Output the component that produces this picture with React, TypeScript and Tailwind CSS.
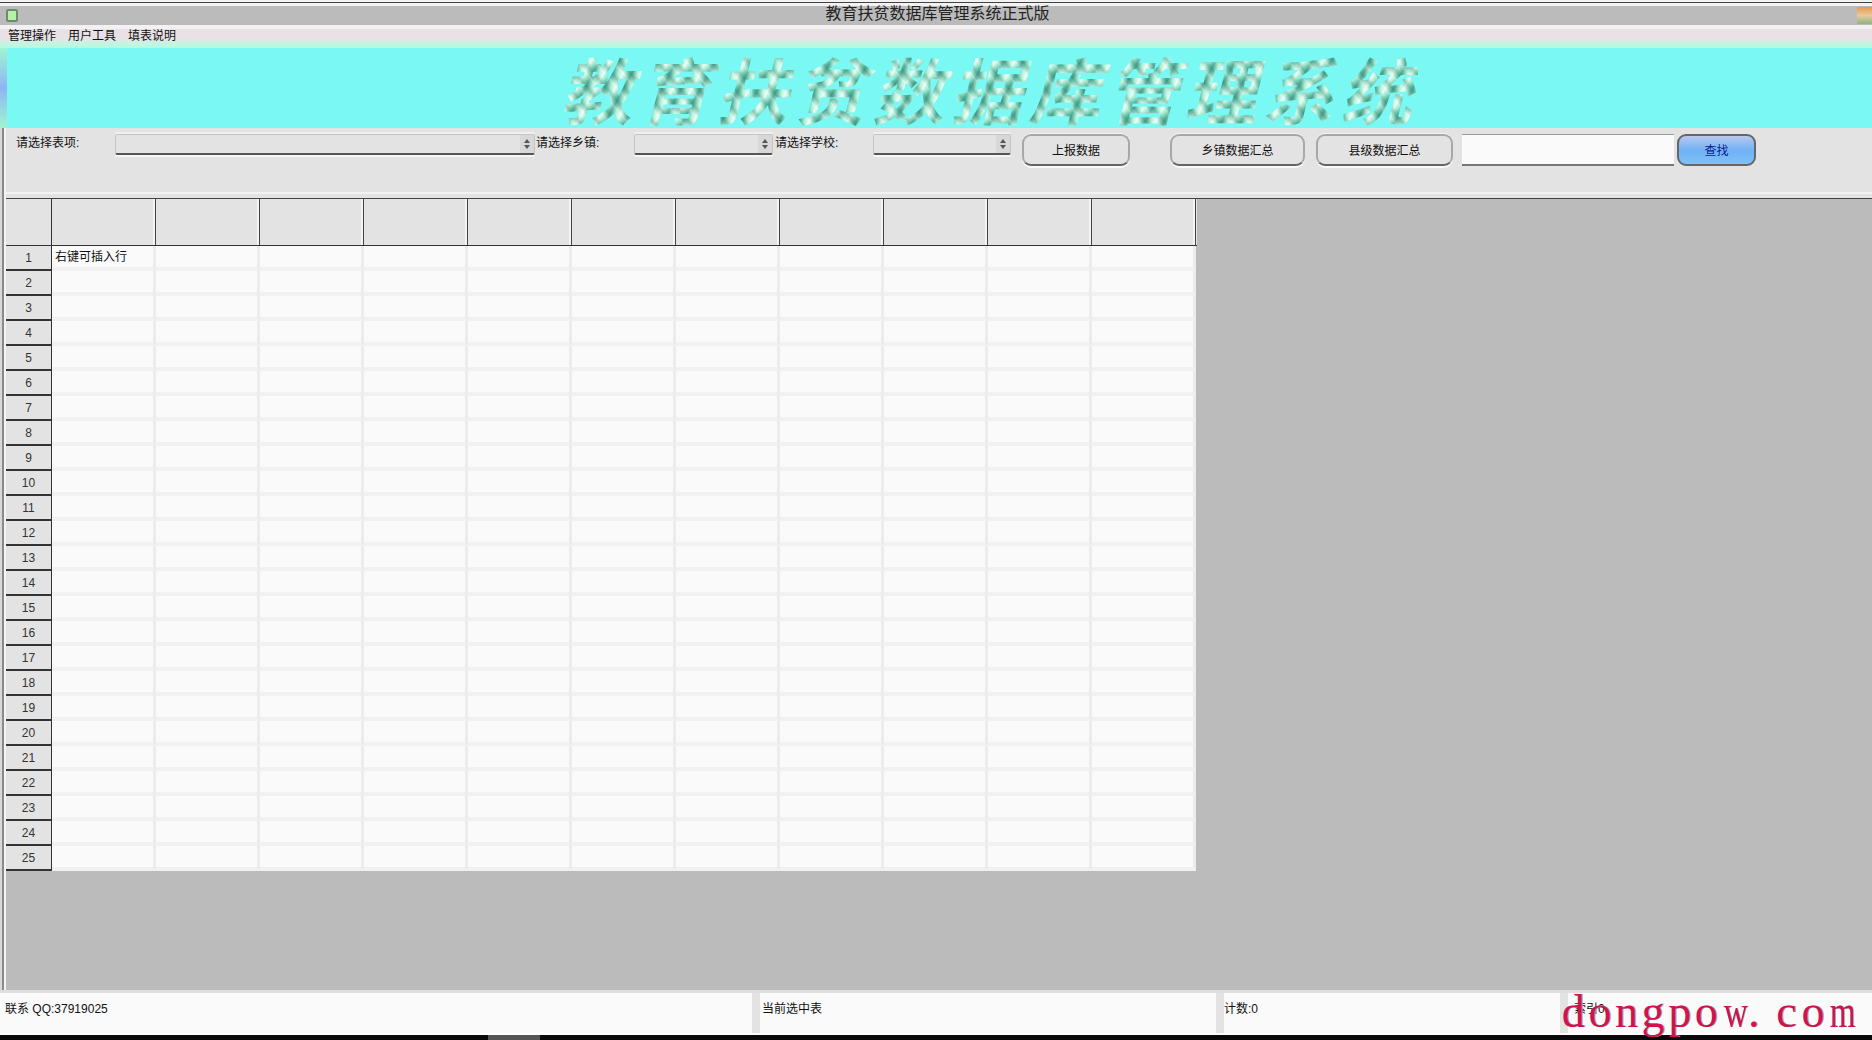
import React from "react";

const columns = Array.from({ length: 11 }, (_, i) => i);
const rows = Array.from({ length: 25 }, (_, i) => i + 1);
const watermark = "dongpow. com".split("");

function cellClass(ch: string) {
  if (ch === ".") return "inline-block w-[15px] text-center";
  if (ch === " ") return "inline-block w-[12px] text-center";
  if (ch === "m" || ch === "w") return "inline-block w-[26.6px] text-center scale-x-[0.72]";
  return "inline-block w-[26.6px] text-center";
}

function Spinner() {
  return (
    <span className="flex h-full w-[14px] flex-col items-center justify-center gap-[2px] bg-[#d8d8d8]">
      <svg width="6" height="4" viewBox="0 0 6 4"><path d="M3 0 L6 4 L0 4 Z" fill="#555" /></svg>
      <svg width="6" height="4" viewBox="0 0 6 4"><path d="M0 0 L6 0 L3 4 Z" fill="#555" /></svg>
    </span>
  );
}

function Select({ className }: { className: string }) {
  return (
    <div className={`flex h-[21px] items-stretch justify-end rounded-[2px] border border-[#c4c4c4] border-b-2 border-b-[#555] bg-[#e3e3e3] shadow-[0_2px_0_#f6f6f6,0_-2px_0_#f0f0f0] ${className}`}>
      <Spinner />
    </div>
  );
}

function Btn({ label, className }: { label: string; className: string }) {
  return (
    <button className={`flex h-[32px] items-center justify-center rounded-[9px] border-2 border-[#a8a8a8] border-b-[#666] bg-[#e3e3e3] pt-[2px] text-[12px] text-[#111] shadow-[0_2px_0_#f8f8f8,0_-1px_0_#f4f4f4] ${className}`}>
      {label}
    </button>
  );
}

export default function App() {
  return (
    <div className="flex h-[1040px] w-[1872px] flex-col overflow-hidden bg-[#bbbbbb] font-['Liberation_Sans','Noto_Sans_CJK_SC',sans-serif] text-[12px] text-[#111]">
      {/* Title bar */}
      <div className="relative h-[29px] shrink-0 bg-[#f2f2f2] pt-[2px]">
        <div className="h-[1px] bg-[#444444]" />
        <div className="mt-[3px] flex h-[19px] items-center justify-between bg-[#bbbbbb]">
          <div className="-mt-[1px] ml-[6px] h-[13px] w-[12px] rounded-[2px] border-2 border-[#6f8a6f] bg-[#b6efa8]" />
          <div className="-mt-[5px] text-[16px] leading-[19px] text-[#222]">教育扶贫数据库管理系统正式版</div>
          <div className="h-[17px] w-[15px] bg-linear-to-b from-[#e89a3c] via-[#e6c9a0] to-[#8fb57e]" />
        </div>
      </div>

      {/* Menu */}
      <div className="flex h-[19px] shrink-0 items-start gap-[12px] bg-linear-to-b from-[#e9e1e6] from-45% to-[#a8ffe0] pl-[8px] text-[12px] leading-[14px]">
        <span>管理操作</span>
        <span>用户工具</span>
        <span>填表说明</span>
      </div>

      {/* Banner */}
      <div className="flex h-[80px] shrink-0 overflow-hidden bg-[#79f8f4]">
        <div className="h-full w-[7px] bg-linear-to-b from-[#9ff5cf] via-[#8fb4f2] to-[#9ff5cf]" />
        <div className="ml-[553px] mt-[-2px] whitespace-nowrap bg-[repeating-linear-gradient(50deg,#ffffff33_0px,#1f6f6055_5px,#ffffff00_9px,#ffffff66_14px),repeating-linear-gradient(118deg,#f4fffa_0px,#8ce6c6_4px,#4fa895_8px,#a5efd3_13px,#d8fff0_17px)] bg-clip-text text-[72px] font-bold italic leading-[96px] tracking-[6px] text-transparent blur-[0.5px]">
          教育扶贫数据库管理系统
        </div>
      </div>

      <div className="flex min-h-0 flex-1">
        {/* Left rail */}
        <div className="w-[6px] shrink-0 border-l-2 border-r-2 border-l-[#d8d8d8] border-r-[#f4f4f4] bg-[#8a8a8a]" />

        <div className="flex min-w-0 flex-1 flex-col">
          {/* Toolbar */}
          <div className="h-[71px] shrink-0 border-b border-b-[#444] bg-[#e3e3e3]">
            <div className="flex h-[66px] items-start pl-[10px] pt-[6px] shadow-[inset_0_-2px_0_#f2f2f2]">
              <span className="w-[99px] leading-[18px]">请选择表项:</span>
              <Select className="w-[420px]" />
              <span className="ml-[1px] w-[98px] leading-[18px]">请选择乡镇:</span>
              <Select className="w-[139px]" />
              <span className="ml-[2px] w-[98px] leading-[18px]">请选择学校:</span>
              <Select className="w-[138px]" />
              <Btn label="上报数据" className="ml-[11px] w-[108px]" />
              <Btn label="乡镇数据汇总" className="ml-[40px] w-[135px]" />
              <Btn label="县级数据汇总" className="ml-[11px] w-[137px]" />
              <div className="ml-[9px] h-[32px] w-[212px] border-b-2 border-t border-b-[#777] border-t-[#999] bg-[#fafafa]" />
              <button className="ml-[3px] flex h-[32px] w-[79px] items-center justify-center rounded-[9px] border-2 border-[#666] bg-linear-to-b from-[#b9c8ef] via-[#6fb2f4] to-[#7fc0f8] pt-[2px] text-[12px] text-[#0a1a90]">
                查找
              </button>
            </div>
          </div>

          {/* Grid */}
          <div className="w-[1191px] shrink-0">
            <div className="flex h-[47px] border-b border-b-[#333] bg-[#e3e3e3]">
              <div className="w-[46px] border-r border-r-[#333]" />
              {columns.map((c) => (
                <div key={c} className="w-[104px] border-r border-r-[#444] shadow-[inset_-2px_0_0_#f4f4f4]" />
              ))}
            </div>
            {rows.map((r) => (
              <div key={r} className="flex h-[25px]">
                <div className="flex w-[46px] items-start justify-center border-r border-b-2 border-r-[#333] border-b-[#333] bg-[#e3e3e3] pt-[4px] text-[12px] leading-[16px] text-[#333]">
                  {r}
                </div>
                {columns.map((c) => (
                  <div key={c} className="w-[104px] border-r-[3px] border-b-[4px] border-r-[#ececec] border-b-[#f1f1f1] bg-[#fafafa] pl-[3px] pt-[2px] leading-[18px]">
                    {r === 1 && c === 0 ? "右键可插入行" : ""}
                  </div>
                ))}
              </div>
            ))}
          </div>

          <div className="min-h-0 flex-1" />
        </div>
      </div>

      {/* Status bar */}
      <div className="relative flex h-[45px] shrink-0 items-start border-t-[3px] border-b-2 border-t-[#dedede] border-b-white bg-[#fafafa] leading-[18px]">
        <div className="h-full w-[752px] pl-[5px] pt-[7px]">联系 QQ:37919025</div>
        <div className="h-full w-[8px] bg-[#e3e3e3]" />
        <div className="h-full w-[456px] pl-[2px] pt-[7px]">当前选中表</div>
        <div className="h-full w-[8px] bg-[#e3e3e3]" />
        <div className="h-full w-[336px] pt-[7px]">计数:0</div>
        <div className="h-full w-[8px] bg-[#e3e3e3]" />
        <div className="h-full flex-1 pl-[6px] pt-[7px]">索引0</div>
        <div className="absolute left-[1560px] top-[-9px] flex font-['Liberation_Serif',serif] text-[46px] leading-[56px] text-[#d0134f] [text-shadow:1px_0_0_#a0a0a0]">
          {watermark.map((ch, i) => (
            <span key={i} className={cellClass(ch)}>
              {ch === " " ? "\u00a0" : ch}
            </span>
          ))}
        </div>
      </div>

      {/* Bottom edge */}
      <div className="h-[5px] shrink-0 bg-[#0a0a0a] pl-[488px]">
        <div className="h-full w-[52px] bg-[#555555]" />
      </div>
    </div>
  );
}
